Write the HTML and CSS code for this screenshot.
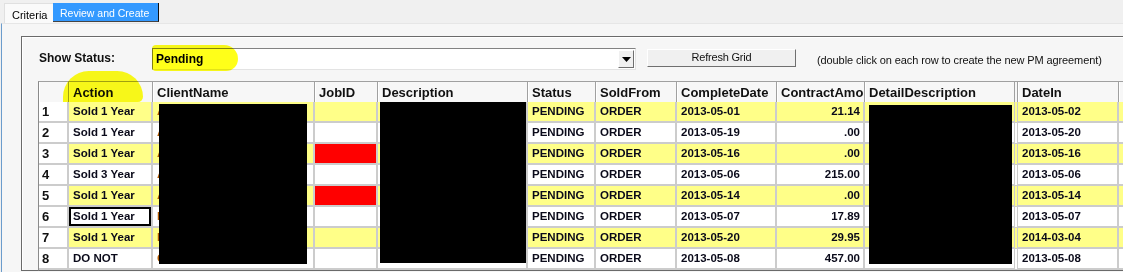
FILE: index.html
```html
<!DOCTYPE html>
<html>
<head>
<meta charset="utf-8">
<link rel="stylesheet" href="styles.css">
</head>
<body>
<div class="tabs">
  <div class="tab">Criteria</div>
  <div class="tab active">Review and Create</div>
</div>
<div class="panel">
  <div class="frame">
    <div class="controls">
      <div class="label">Show Status:</div>
      <div class="combo">
        <span class="combo-text">Pending</span>
        <span class="combo-btn"><svg width="9" height="5" viewBox="0 0 9 5"><path d="M0 0H9L4.5 5Z" fill="#000"/></svg></span>
      </div>
      <div class="button">Refresh Grid</div>
      <div class="hint">(double click on each row to create the new PM agreement)</div>
    </div>
    <div class="grid">
      <div class="hc rh"></div>
      <div class="hc">Action</div>
      <div class="hc">ClientName</div>
      <div class="hc">JobID</div>
      <div class="hc">Description</div>
      <div class="hc">Status</div>
      <div class="hc">SoldFrom</div>
      <div class="hc">CompleteDate</div>
      <div class="hc">ContractAmo</div>
      <div class="hc dbl">DetailDescription</div>
      <div class="hc">DateIn</div>
      <div class="hc"></div>

      <div class="c rn">1</div><div class="c y">Sold 1 Year</div><div class="c y cn">A</div><div class="c y"></div><div class="c y"></div><div class="c y">PENDING</div><div class="c y">ORDER</div><div class="c y">2013-05-01</div><div class="c y num">21.14</div><div class="c y dbl"></div><div class="c y">2013-05-02</div><div class="c y"></div>
      <div class="c rn">2</div><div class="c">Sold 1 Year</div><div class="c cn">A</div><div class="c"></div><div class="c"></div><div class="c">PENDING</div><div class="c">ORDER</div><div class="c">2013-05-19</div><div class="c num">.00</div><div class="c dbl"></div><div class="c">2013-05-20</div><div class="c"></div>
      <div class="c rn">3</div><div class="c y">Sold 1 Year</div><div class="c y cn">A</div><div class="c red"></div><div class="c y"></div><div class="c y">PENDING</div><div class="c y">ORDER</div><div class="c y">2013-05-16</div><div class="c y num">.00</div><div class="c y dbl"></div><div class="c y">2013-05-16</div><div class="c y"></div>
      <div class="c rn">4</div><div class="c">Sold 3 Year</div><div class="c cn">A</div><div class="c"></div><div class="c"></div><div class="c">PENDING</div><div class="c">ORDER</div><div class="c">2013-05-06</div><div class="c num">215.00</div><div class="c dbl">.</div><div class="c">2013-05-06</div><div class="c"></div>
      <div class="c rn">5</div><div class="c y">Sold 1 Year</div><div class="c y cn">A</div><div class="c red"></div><div class="c y"></div><div class="c y">PENDING</div><div class="c y">ORDER</div><div class="c y">2013-05-14</div><div class="c y num">.00</div><div class="c y dbl"></div><div class="c y">2013-05-14</div><div class="c y"></div>
      <div class="c rn">6</div><div class="c focus">Sold 1 Year</div><div class="c cn">I</div><div class="c"></div><div class="c"></div><div class="c">PENDING</div><div class="c">ORDER</div><div class="c">2013-05-07</div><div class="c num">17.89</div><div class="c dbl"></div><div class="c">2013-05-07</div><div class="c"></div>
      <div class="c rn">7</div><div class="c y">Sold 1 Year</div><div class="c y cn">I</div><div class="c y"></div><div class="c y"></div><div class="c y">PENDING</div><div class="c y">ORDER</div><div class="c y">2013-05-20</div><div class="c y num">29.95</div><div class="c y dbl">.</div><div class="c y">2014-03-04</div><div class="c y"></div>
      <div class="c rn">8</div><div class="c">DO NOT</div><div class="c cn">C</div><div class="c"></div><div class="c"></div><div class="c">PENDING</div><div class="c">ORDER</div><div class="c">2013-05-08</div><div class="c num">457.00</div><div class="c dbl"></div><div class="c">2013-05-08</div><div class="c"></div>

      <div class="redact r1"></div>
      <div class="redact r2"></div>
      <div class="redact r3"></div>
    </div>
  </div>
  <div class="marker m1"></div>
  <div class="marker m2"></div>
</div>
</body>
</html>
```
FILE: styles.css
```css
html, body {
  margin: 0;
  padding: 0;
  background: #f0f0f0;
  overflow: hidden;
  font-family: "Liberation Sans", Arial, sans-serif;
  color: #000;
}
.tabs {
  display: flex;
  padding: 3px 0 0 4px;
  height: 20px;
}
.tab {
  font-size: 11px;
  padding: 5px 7px 0 7px;
  width: 34px;
  height: 15px;
  background: #fafafa;
  border-top: 1px solid #e0e0e0;
  border-left: 1px solid #e0e0e0;
}
.tab.active {
  width: auto;
  background: #3399ff;
  color: #fff;
  font-size: 10.5px;
  padding: 4px 9px 0 7px;
  border: none;
  border-right: 1px solid #111;
  border-bottom: 1px solid #444;
  height: 14px;
}
.panel {
  position: relative;
  background: #f6f6f6;
  border-top: 1px solid #e6e6e6;
  border-left: 1px solid #6b9ccc;
  margin-left: 1px;
  height: 248px;
}
.frame {
  margin-left: 19px;
  margin-top: 12px;
  border-top: 1px solid #6a6a6a;
  border-left: 1px solid #6a6a6a;
  box-shadow: inset 1px 1px 0 #fff;
  padding: 11px 0 0 16px;
  height: 222px;
  border-bottom: 1px solid #6a6a6a;
}
.controls {
  display: flex;
  align-items: center;
  height: 22px;
}
.label {
  font-size: 12px;
  font-weight: bold;
  width: 114px;
  padding-left: 1px;
  box-sizing: border-box;
  color: #101010;
  margin-top: -3px;
}
.combo {
  width: 484px;
  height: 22px;
  box-sizing: border-box;
  border: 1px solid #828282;
  border-bottom-color: #e3e3e3;
  border-right-color: #e3e3e3;
  background: #fff;
  display: flex;
  align-items: center;
  justify-content: space-between;
}
.combo-text {
  font-size: 12px;
  font-weight: bold;
  padding-left: 3px;
}
.combo-btn {
  width: 16px;
  height: 18px;
  box-sizing: border-box;
  background: #f0f0f0;
  border: 1px solid #fff;
  border-right-color: #6f6f6f;
  border-bottom-color: #6f6f6f;
  display: flex;
  align-items: center;
  justify-content: center;
  margin-right: 1px;
}
.button {
  margin-left: 11px;
  width: 149px;
  height: 18px;
  box-sizing: border-box;
  background: #f0f0f0;
  border: 1px solid #fff;
  border-right-color: #6f6f6f;
  border-bottom-color: #6f6f6f;
  font-size: 11px;
  letter-spacing: -0.2px;
  text-align: center;
  line-height: 15px;
  color: #111;
  align-self: flex-start;
  margin-top: 1px;
}
.hint {
  margin-left: 21px;
  font-size: 11px;
  letter-spacing: -0.1px;
  color: #111;
  margin-top: 2px;
  white-space: nowrap;
}
.grid {
  position: relative;
  margin-top: 11px;
  display: grid;
  grid-template-columns: 30px 84px 162px 63px 150px 68px 81px 100px 88px 153px 101px 60px;
  grid-auto-rows: 21px;
  grid-template-rows: 20px;
  border-top: 1px solid #a0a0a0;
  border-left: 1px solid #8a8a8a;
  border-bottom: 1px solid #6a6a6a;
  width: max-content;
  background: #fff;
}
.hc {
  background: #f7f7f7;
  border-right: 1px solid #a0a0a0;
  box-shadow: inset 1px 0 0 #fff;
  font-size: 13px;
  font-weight: bold;
  padding-left: 4px;
  line-height: 21px;
  white-space: nowrap;
  overflow: hidden;
  color: #111;
}
.hc.dbl {
  border-right: 4px double #a0a0a0;
}
.c {
  box-sizing: border-box;
  border-right: 2px solid #cccccc;
  border-bottom: 2px solid #cccccc;
  font-size: 11.5px;
  font-weight: bold;
  padding-left: 4px;
  line-height: 19px;
  white-space: nowrap;
  overflow: hidden;
  color: #0a0a1a;
  background: #fff;
}
.c.y { background: #ffff88; }
.c.red { background: #ff0000; }
.c.num { text-align: right; padding-right: 3px; }
.c.dbl { border-right: 4px double #cccccc; }
.c.cn { color: #b05a00; }
.c.rn {
  font-size: 13px;
  padding-left: 3px;
  background: #fff;
  color: #111;
}
.c.focus { box-shadow: inset 0 0 0 2px #000; }
.redact {
  position: absolute;
  background: #000;
}
.r1 { left: 120px; top: 22px; width: 148px; height: 160px; }
.r2 { left: 341px; top: 20px; width: 146px; height: 161px; }
.r3 { left: 830px; top: 23px; width: 143px; height: 159px; }
.marker {
  position: absolute;
  background: #ffff00;
  mix-blend-mode: multiply;
  opacity: 0.9;
}
.m1 {
  left: 150px; top: 21px; width: 86px; height: 26px;
  border-radius: 4px 14px 12px 4px;
}
.m2 {
  left: 61px; top: 47px; width: 80px; height: 31px;
  border-radius: 30px 30px 6px 0;
}
```
